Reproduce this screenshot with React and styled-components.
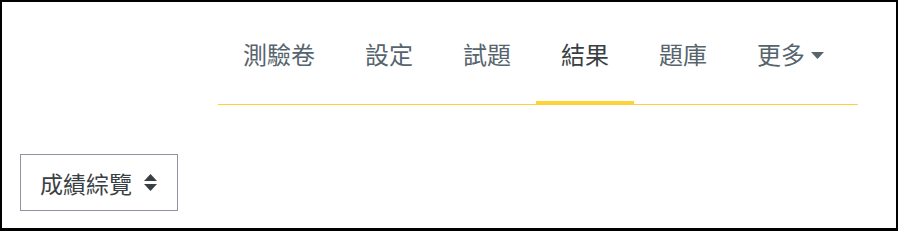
import React from "react";
import styled, { createGlobalStyle } from "styled-components";

const Global = createGlobalStyle`
  html, body { margin: 0; padding: 0; background: #fff; }
  body { font-family: "Noto Sans CJK TC", "Noto Sans", sans-serif; }
  * { box-sizing: border-box; }
`;

const Frame = styled.div`
  width: 898px;
  height: 231px;
  border: 2px solid #000;
  border-bottom-width: 3px;
  background: #fff;
  display: flex;
  flex-direction: column;
`;

const Nav = styled.nav`
  margin-left: 216px;
  width: 640px;
  display: flex;
  border-bottom: 1px solid #fbd437;
`;

const Tab = styled.a`
  position: relative;
  display: flex;
  align-items: center;
  gap: 6px;
  padding: 34px 25px 32px;
  font-size: 24px;
  line-height: 36px;
  color: ${(p) => (p.$active ? "#3a3f44" : "#56646e")};
  text-decoration: none;
  white-space: nowrap;

  &::after {
    content: "";
    display: ${(p) => (p.$active ? "block" : "none")};
    position: absolute;
    left: 0;
    right: 0;
    bottom: -1px;
    height: 4px;
    background: #fbd437;
  }
`;

const Caret = styled.svg`
  width: 13px;
  height: 7px;
  fill: #56646e;
  margin-top: 2px;
`;

const Body = styled.div`
  padding: 49px 0 0 18px;
`;

const Select = styled.div`
  width: 158px;
  height: 57px;
  border: 1px solid #8f959e;
  display: flex;
  align-items: center;
  justify-content: space-between;
  padding: 0 20px 0 19px;
  font-size: 23px;
  color: #3a3f44;
`;

const Arrows = styled.svg`
  width: 13px;
  height: 17px;
  fill: #3a3f44;
`;

const tabs = ["測驗卷", "設定", "試題", "結果", "題庫"];

export default function App() {
  return (
    <>
      <Global />
      <Frame>
        <Nav>
          {tabs.map((t) => (
            <Tab key={t} $active={t === "結果"}>
              {t}
            </Tab>
          ))}
          <Tab>
            更多
            <Caret viewBox="0 0 13 7">
              <path d="M0 0 H13 L6.5 7 Z" />
            </Caret>
          </Tab>
        </Nav>
        <Body>
          <Select>
            成績綜覽
            <Arrows viewBox="0 0 13 17">
              <path d="M6.5 0 L13 7 H0 Z" />
              <path d="M0 10 H13 L6.5 17 Z" />
            </Arrows>
          </Select>
        </Body>
      </Frame>
    </>
  );
}
